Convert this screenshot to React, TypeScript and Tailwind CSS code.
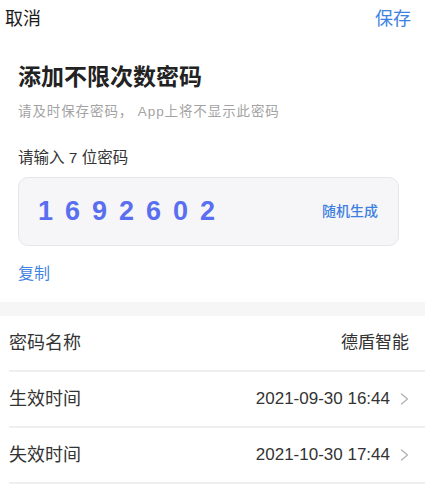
const rows = [
    { label: '密码名称', value: '德盾智能', arrow: false },
    { label: '生效时间', value: '2021-09-30 16:44', arrow: true },
    { label: '失效时间', value: '2021-10-30 17:44', arrow: true },
];

function Chevron() {
    return (
        <svg width="9" height="14" viewBox="0 0 9 14" fill="none" className="text-[#b3b3b3]">
            <path d="M1.5 2 L7.5 7 L1.5 12" stroke="currentColor" strokeWidth="1.3" strokeLinecap="round" strokeLinejoin="round" />
        </svg>
    );
}

export default function App() {
    return (
        <div className="w-[425px] h-[486px] overflow-hidden bg-white font-['Liberation_Sans','Noto_Sans_CJK_SC',sans-serif]">
            {/* top bar */}
            <div className="flex items-center justify-between h-[38px] pl-[5px] pr-[14px]">
                <span className="text-[18px] text-[#1c1c1c]">取消</span>
                <span className="text-[18px] text-[#3d82e0]">保存</span>
            </div>

            <div className="px-[18px]">
                <h1 className="mt-[24px] text-[23px] leading-[30px] font-semibold text-[#222]">添加不限次数密码</h1>
                <p className="mt-[11px] text-[13.5px] leading-[18px] text-[#a3a3a3] tracking-[0.9px]">请及时保存密码， App上将不显示此密码</p>

                <p className="mt-[27px] text-[15.5px] leading-[20px] text-[#333]">请输入 7 位密码</p>

                <div className="mt-[9px] w-[381px] h-[69px] flex items-center justify-between bg-[#f6f6f8] border border-[#e6e6ea] rounded-[10px] pl-[19px] pr-[20px]">
                    <span className="text-[27px] font-bold text-[#5a6ff0] tracking-[12px]">1692602</span>
                    <span className="text-[14px] font-medium text-[#3f7fe0]">随机生成</span>
                </div>

                <p className="mt-[17px] text-[16px] leading-[22px] text-[#3f84e0]">复制</p>
            </div>

            <div className="mt-[17px] h-[14px] bg-[#f6f6f7]" />

            <div className="pl-[9px]">
                {rows.map(r => (
                    <div key={r.label} className="flex items-center justify-between h-[56px] border-b-2 border-[#efeff1] pr-[16px]">
                        <span className="text-[18px] text-[#333]">{r.label}</span>
                        <span className="flex items-center gap-[10px] text-[17px] text-[#333]">
                            {r.value}
                            {r.arrow && <Chevron />}
                        </span>
                    </div>
                ))}
            </div>
        </div>
    );
}
